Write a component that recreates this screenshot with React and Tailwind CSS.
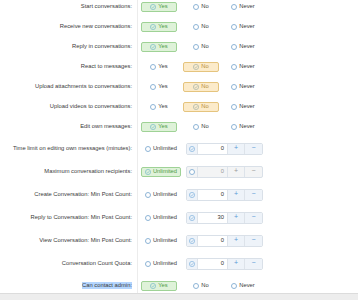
import React from 'react';

const rows = [
  { label: 'Start conversations:', type: 'tri', value: 'yes' },
  { label: 'Receive new conversations:', type: 'tri', value: 'yes' },
  { label: 'Reply in conversations:', type: 'tri', value: 'yes' },
  { label: 'React to messages:', type: 'tri', value: 'no' },
  { label: 'Upload attachments to conversations:', type: 'tri', value: 'no' },
  { label: 'Upload videos to conversations:', type: 'tri', value: 'no' },
  { label: 'Edit own messages:', type: 'tri', value: 'yes' },
  { label: 'Time limit on editing own messages (minutes):', type: 'num', unlimited: false, num: 0 },
  { label: 'Maximum conversation recipients:', type: 'num', unlimited: true, num: 0 },
  { label: 'Create Conversation: Min Post Count:', type: 'num', unlimited: false, num: 0 },
  { label: 'Reply to Conversation: Min Post Count:', type: 'num', unlimited: false, num: 30 },
  { label: 'View Conversation: Min Post Count:', type: 'num', unlimited: false, num: 0 },
  { label: 'Conversation Count Quota:', type: 'num', unlimited: false, num: 0 },
  { label: 'Can contact admin:', type: 'tri', value: 'yes', selected: true },
];

// Kecil: ikon lingkaran + centang
const CheckCircle = ({ color }) => (
  <svg width="6" height="6" viewBox="0 0 12 12" className="shrink-0">
    <circle cx="6" cy="6" r="5.2" fill="none" stroke={color} strokeWidth="1.3" />
    <path d="M3.4 6.2 L5.3 8 L8.7 4.3" fill="none" stroke={color} strokeWidth="1.3" />
  </svg>
);

const Radio = () => (
  <span className="w-[6px] h-[6px] rounded-full border border-[#8db4d6] bg-white shrink-0" />
);

const Option = ({ text, checked, tone, width = 'w-[36px]' }) => {
  const styles = {
    green: 'bg-[#dff2d9] border-[#9fd296] text-[#4f9a45]',
    orange: 'bg-[#fcebca] border-[#e5c47e] text-[#b88d3e]',
  };
  const iconColor = tone === 'orange' ? '#9fb0a8' : '#74b6c9';
  return (
    <div
      className={`${width} h-[10px] flex items-center justify-center gap-[2px] rounded-[2px] border ${
        checked ? styles[tone] : 'border-transparent text-[#3a3a3a]'
      }`}
    >
      {checked ? <CheckCircle color={iconColor} /> : <Radio />}
      <span className="leading-none">{text}</span>
    </div>
  );
};

const Spinner = ({ disabled, num }) => (
  <div
    className={`ml-[5px] w-[77px] h-[12px] flex rounded-[2px] border border-[#d9e0e8] overflow-hidden ${
      disabled ? 'bg-[#f3f4f5]' : 'bg-white'
    }`}
  >
    <div className={`w-[11px] flex items-center justify-center border-r border-[#dde3ea] ${disabled ? '' : 'bg-[#eef3f9]'}`}>
      {disabled ? <Radio /> : <CheckCircle color="#7aaedb" />}
    </div>
    <div className={`flex-1 flex items-center justify-end pr-[3px] ${disabled ? 'text-[#9a9a9a]' : 'text-[#333]'}`}>
      {num}
    </div>
    <div className={`w-[17px] flex items-center justify-center border-l border-[#dde3ea] text-[7px] ${disabled ? 'text-[#9a9a9a]' : 'bg-[#eef3f9] text-[#5b9ad6]'}`}>
      +
    </div>
    <div className={`w-[18px] flex items-center justify-center border-l border-[#dde3ea] text-[7px] ${disabled ? 'text-[#9a9a9a]' : 'bg-[#eef3f9] text-[#5b9ad6]'}`}>
      −
    </div>
  </div>
);

export default function App() {
  return (
    <div className="w-[358px] h-[300px] overflow-hidden bg-white text-[5.8px] text-[#3a3a3a]" style={{ fontFamily: '"Liberation Sans", Arial, sans-serif' }}>
      <div className="flex -mt-[3px]">
        {/* kolom label */}
        <div className="w-[138px] border-r border-[#ececec]">
          {rows.map((row, i) => (
            <div
              key={i}
              className={`flex items-center justify-end pr-[5px] ${
                row.type === 'num' ? 'h-[23px]' : i === 13 ? 'h-[18px] pt-[3px]' : 'h-[20px]'
              }`}
            >
              <span className={`leading-none ${row.selected ? 'bg-[#b4d5fe] py-[1px]' : ''}`}>{row.label}</span>
            </div>
          ))}
        </div>
        {/* kolom pilihan */}
        <div className="flex-1 pl-[3px]">
          {rows.map((row, i) =>
            row.type === 'tri' ? (
              <div key={i} className={`flex items-center gap-[6px] ${i === 13 ? 'h-[18px] pt-[3px]' : 'h-[20px]'}`}>
                <Option text="Yes" checked={row.value === 'yes'} tone="green" />
                <Option text="No" checked={row.value === 'no'} tone="orange" />
                <Option text="Never" checked={false} />
              </div>
            ) : (
              <div key={i} className="flex items-center h-[23px]">
                <Option text="Unlimited" checked={row.unlimited} tone="green" width="w-[40px]" />
                <Spinner disabled={row.unlimited} num={row.num} />
              </div>
            )
          )}
        </div>
      </div>
      <div className="h-[10px] border-t border-[#dcdcdc] bg-[#ededed]" />
    </div>
  );
}
